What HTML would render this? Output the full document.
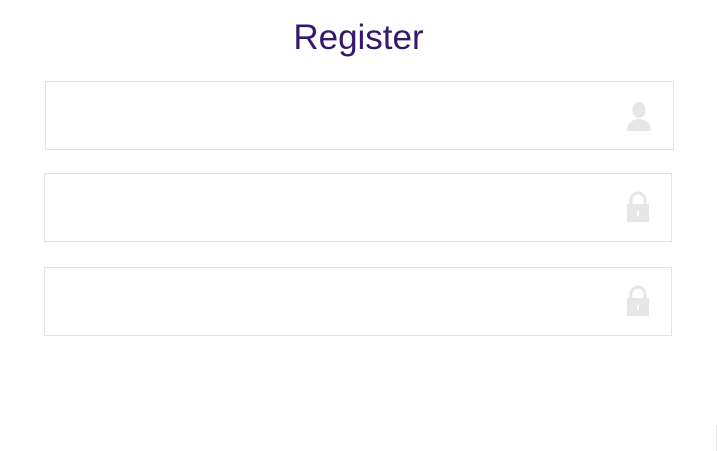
<!DOCTYPE html>
<html><head><style>
body{margin:0;width:717px;height:451px;background:#fff;position:relative;overflow:hidden;font-family:"Liberation Sans",sans-serif}
h1{position:absolute;top:18px;left:0;width:717px;text-align:center;margin:0;font-weight:normal;font-size:35px;color:#35186b;letter-spacing:0px}
.box{position:absolute;border:1px solid #e3e3e3;box-sizing:border-box;height:69px}
.ic{position:absolute}
</style></head><body>
<h1>Register</h1>
<div class="box" style="left:45px;top:81px;width:629px"></div>
<div class="box" style="left:44px;top:173px;width:628px"></div>
<div class="box" style="left:44px;top:267px;width:628px"></div>
<svg class="ic" style="left:624px;top:100px" width="30" height="32" viewBox="0 0 30 32">
<ellipse cx="15" cy="10" rx="6.5" ry="8" fill="#e6e6e6"/>
<path d="M3 31 Q3 20 15 19 Q27 20 27 31 Z" fill="#e6e6e6"/>
</svg>
<svg class="ic" style="left:625px;top:191px" width="26" height="32" viewBox="0 0 26 32">
<path d="M6 14 V9 A7 7 0 0 1 20 9 V14" fill="none" stroke="#e6e6e6" stroke-width="3"/>
<rect x="2" y="13" width="22" height="18" fill="#e6e6e6"/>
<rect x="12" y="20" width="2" height="5" fill="#fff"/>
</svg>
<svg class="ic" style="left:625px;top:285px" width="26" height="32" viewBox="0 0 26 32">
<path d="M6 14 V9 A7 7 0 0 1 20 9 V14" fill="none" stroke="#e6e6e6" stroke-width="3"/>
<rect x="2" y="13" width="22" height="18" fill="#e6e6e6"/>
<rect x="12" y="20" width="2" height="5" fill="#fff"/>
</svg>
<div style="position:absolute;left:716px;top:425px;width:1px;height:26px;background:#e8e8e8"></div>
</body></html>
